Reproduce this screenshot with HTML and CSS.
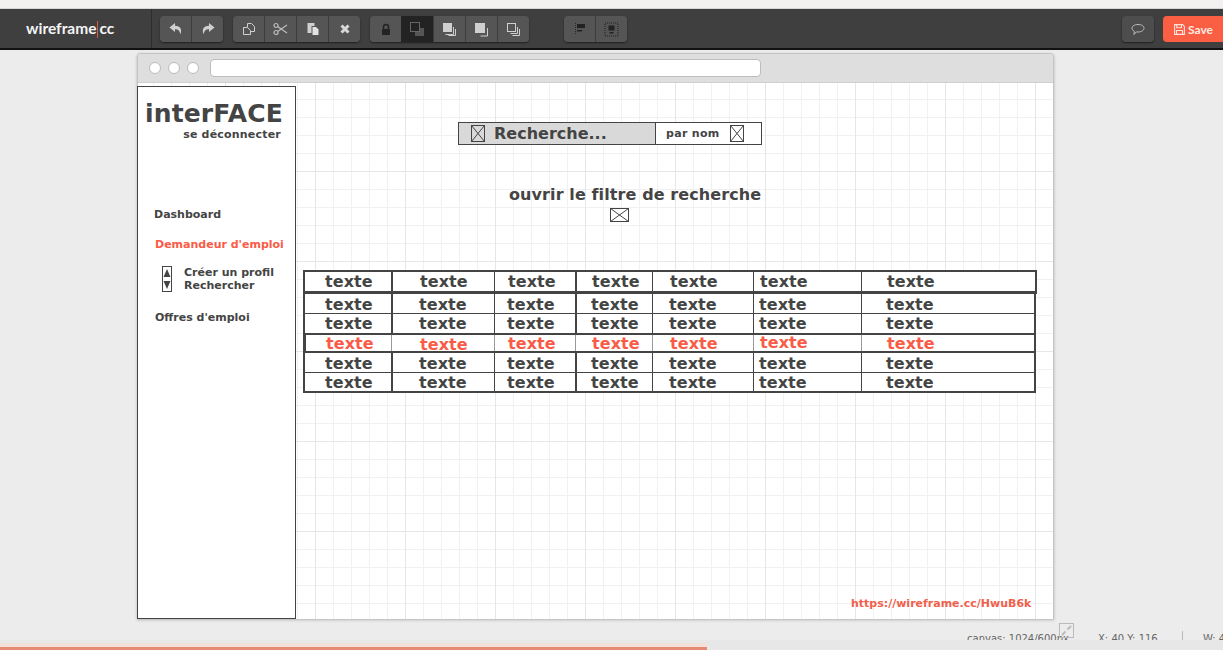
FILE: index.html
```html
<!DOCTYPE html>
<html lang="fr">
<head>
    <meta charset="UTF-8">
    <meta name="viewport" content="width=device-width, initial-scale=1.0">
    <title>wireframe.cc</title>
    <link rel="stylesheet" href="styles.css">
</head>
<body>
    <div class="top-strip"></div>
    <header class="toolbar">
        <div class="logo">wireframe<span class="logo-bar"></span>cc</div>
        <div class="btn-group first">
            <button class="tool"><svg width="14" height="14" viewBox="0 0 14 14"><path d="M6 1L0.5 5.500 6 10V7.200c3 0 4.600 1 5.500 5.300C13.500 6.500 10.500 3.800 6 3.800z" fill="#cfcfcf"/></svg></button>
            <button class="tool"><svg width="14" height="14" viewBox="0 0 14 14"><path d="M8 1l5.500 4.500L8 10V7.200c-3 0-4.600 1-5.500 5.300C.5 6.500 3.500 3.800 8 3.800z" fill="#cfcfcf"/></svg></button>
        </div>
        <div class="btn-group">
            <button class="tool"><svg width="14" height="14" viewBox="0 0 14 14" fill="none" stroke="#d0d0d0"><path d="M5.500 5V1.500h4l3 3v5h-4"/><path d="M1.500 5.500h4l3 3v4h-7z"/></svg></button>
            <button class="tool"><svg width="15" height="14" viewBox="0 0 15 14" fill="none" stroke="#bdbdbd" stroke-width="1.200"><circle cx="3" cy="3.500" r="2"/><circle cx="3" cy="10.500" r="2"/><path d="M4.600 4.600L14 11M4.600 9.400L14 3"/></svg></button>
            <button class="tool"><svg width="14" height="14" viewBox="0 0 14 14"><path d="M1.500 1h7v3h-3v7h-4z" fill="#cfcfcf"/><path d="M6.500 5H10l2.500 2.500V13h-6z" fill="#e2e2e2"/></svg></button>
            <button class="tool"><svg width="12" height="12" viewBox="0 0 12 12"><path d="M2.500 2.500l7 7M9.500 2.500l-7 7" stroke="#d8d8d8" stroke-width="3"/></svg></button>
        </div>
        <div class="btn-group">
            <button class="tool"><svg width="12" height="13" viewBox="0 0 12 13"><path d="M3.500 6V4a2.500 2.500 0 015 0v2" fill="none" stroke="#222" stroke-width="1.500"/><rect x="2" y="6" width="8" height="6" rx="1" fill="#222"/></svg></button>
            <button class="tool active"><svg width="15" height="15" viewBox="0 0 15 15"><rect x="5" y="6" width="9" height="8" fill="#555"/><rect x=".5" y=".5" width="9" height="9" fill="#232323" stroke="#666"/></svg></button>
            <button class="tool"><svg width="15" height="15" viewBox="0 0 15 15"><path d="M11.500 5v7.500h-8" fill="none" stroke="#cfcfcf"/><path d="M13.500 7v6.500h-7" fill="none" stroke="#cfcfcf"/><rect x="1" y="1" width="9" height="9" fill="#cfcfcf"/></svg></button>
            <button class="tool"><svg width="15" height="15" viewBox="0 0 15 15"><rect x="1" y="1" width="10" height="10" fill="#cfcfcf"/><path d="M13.500 6v8h-7" fill="none" stroke="#cfcfcf"/></svg></button>
            <button class="tool"><svg width="15" height="15" viewBox="0 0 15 15" fill="none" stroke="#cfcfcf"><rect x="1.500" y="1.500" width="8" height="8"/><path d="M11.500 5v6.500h-7M13.500 7v6.500h-7"/></svg></button>
        </div>
        <div class="btn-group last-left">
            <button class="tool"><svg width="14" height="14" viewBox="0 0 14 14"><path d="M2.500 1v12" stroke="#2a2a2a" stroke-dasharray="1 1"/><rect x="4" y="2" width="8" height="4" fill="#222"/><rect x="4" y="8" width="5" height="1.500" fill="#222"/></svg></button>
            <button class="tool"><svg width="15" height="15" viewBox="0 0 15 15"><rect x="1" y="1" width="13" height="13" fill="none" stroke="#222" stroke-dasharray="1 1"/><rect x="4.500" y="3.500" width="6" height="5" fill="#222"/><rect x="5.500" y="10" width="4" height="1.500" fill="#222"/></svg></button>
        </div>
        <div class="toolbar-right">
            <button class="tool solo"><svg width="14" height="13" viewBox="0 0 14 13" fill="none" stroke="#bdbdbd"><path d="M7 1.500c3.300 0 6 1.500 6 3.700S10.300 9 7 9c-.6 0-1.100 0-1.700-.1L3 11.500l.3-3.200C1.800 7.600 1 6.500 1 5.200 1 3 3.700 1.500 7 1.500z"/></svg></button>
            <button class="save"><svg width="11" height="11" viewBox="0 0 11 11" fill="none" stroke="#ffe3dc" stroke-width="1.100"><path d="M.6.6h8l1.800 1.800v8H.6z"/><path d="M2.800.8v3h4.600v-3M2.500 10V6.500h6V10"/></svg>Save</button>
        </div>
    </header>

    <main class="workspace">
        <div class="frame">
            <div class="frame-bar">
                <span class="dot"></span>
                <span class="dot"></span>
                <span class="dot"></span>
                <span class="url-bar"></span>
            </div>
            <div class="canvas">
                <aside class="sidebar">
                    <div class="brand">interFACE</div>
                    <div class="logout">se déconnecter</div>
                    <div class="nav-item dashboard">Dashboard</div>
                    <div class="nav-item nav-red">Demandeur d'emploi</div>
                    <div class="subnav">
                        <svg class="stepper" width="10" height="26" viewBox="0 0 10 26"><rect x=".5" y=".5" width="9" height="25" fill="#fff" stroke="#444"/><path d="M5 3l3.500 8h-7z" fill="#444"/><path d="M1.500 15h7L5 23z" fill="#444"/></svg>
                        <div class="subnav-links">
                            <div>Créer un profil</div>
                            <div>Rechercher</div>
                        </div>
                    </div>
                    <div class="nav-item offers">Offres d'emploi</div>
                </aside>

                <div class="search-box">
                    <div class="search-main">
                        <svg class="ph" width="14" height="17" viewBox="0 0 14 17"><rect x=".5" y=".5" width="13" height="16" fill="none" stroke="#444"/><path d="M.5.500l13 16M13.500.500l-13 16" stroke="#444" fill="none"/></svg>
                        <span>Recherche...</span>
                    </div>
                    <div class="search-side">
                        <span>par nom</span>
                        <svg class="ph" width="14" height="17" viewBox="0 0 14 17"><rect x=".5" y=".5" width="13" height="16" fill="none" stroke="#444"/><path d="M.5.500l13 16M13.500.500l-13 16" stroke="#444" fill="none"/></svg>
                    </div>
                </div>

                <div class="filter">
                    <div class="filter-title">ouvrir le filtre de recherche</div>
                    <svg class="filter-icon" width="19" height="14" viewBox="0 0 19 14"><rect x=".5" y=".5" width="18" height="13" fill="#fff" stroke="#444"/><path d="M.5.500l18 13M18.500.500l-18 13" stroke="#444" fill="none"/></svg>
                </div>

                <div class="grid-table">
                    <div class="row head"><span>texte</span><span>texte</span><span>texte</span><span>texte</span><span>texte</span><span>texte</span><span>texte</span></div>
                    <div class="body">
                        <div class="row low"><span>texte</span><span>texte</span><span>texte</span><span>texte</span><span>texte</span><span>texte</span><span>texte</span></div>
                        <div class="row"><span>texte</span><span>texte</span><span>texte</span><span>texte</span><span>texte</span><span>texte</span><span>texte</span></div>
                        <div class="row selected"><span>texte</span><span>texte</span><span>texte</span><span>texte</span><span>texte</span><span>texte</span><span>texte</span></div>
                        <div class="row low"><span>texte</span><span>texte</span><span>texte</span><span>texte</span><span>texte</span><span>texte</span><span>texte</span></div>
                        <div class="row"><span>texte</span><span>texte</span><span>texte</span><span>texte</span><span>texte</span><span>texte</span><span>texte</span></div>
                    </div>
                </div>

                <div class="share-link">https://wireframe.cc/HwuB6k</div>
            </div>
        </div>
        <div class="status">
            <span class="canvas-size">canvas: 1024/600px</span>
            <span class="coords">X: 40 Y: 116</span>
            <span class="dims">W: 4</span>
            <svg class="expand" width="15" height="15" viewBox="0 0 15 15" fill="none" stroke="#bbb"><rect x=".5" y=".5" width="14" height="14"/><path d="M8.500 6.500L12 3M3 12l3.500-3.500" stroke-width="2"/></svg>
        </div>
    </main>

    <div class="progress"><div class="progress-fill"></div></div>
</body>
</html>
```

FILE: styles.css
```css
html, body {
    margin: 0;
    padding: 0;
    height: 100%;
}
body {
    width: 1223px;
    height: 650px;
    display: flex;
    flex-direction: column;
    overflow: hidden;
    background-color: #ececec;
    font-family: "DejaVu Sans", sans-serif;
    color: #444;
}
svg {
    display: block;
    flex: none;
}

/* toolbar */
.top-strip {
    height: 9px;
    background-color: #f2f1ef;
    border-bottom: 1px solid #d6d6d4;
    box-sizing: border-box;
}
.toolbar {
    height: 41px;
    box-sizing: border-box;
    display: flex;
    align-items: flex-start;
    padding-top: 7px;
    background-color: #3f3f3f;
    border-bottom: 2px solid #111;
}
.logo {
    width: 152px;
    height: 39px;
    margin-top: -7px;
    padding-left: 26px;
    box-sizing: border-box;
    border-right: 1px solid #2e2e2e;
    font-family: Lato, sans-serif;
    font-weight: 700;
    font-size: 15.5px;
    line-height: 39px;
    color: #f4f4f4;
}
.logo-bar {
    display: inline-block;
    width: 1px;
    height: 17px;
    margin: 0 1px;
    vertical-align: -4px;
    background-color: #d0604a;
}
.btn-group {
    display: flex;
    margin-left: 10px;
    border-radius: 4px;
    box-shadow: 0 1px 2px rgba(0, 0, 0, 0.5);
}
.btn-group.first {
    margin-left: 8px;
}
.btn-group.last-left {
    margin-left: 35px;
}
.tool {
    width: 32px;
    height: 26px;
    padding: 0;
    display: flex;
    align-items: center;
    justify-content: center;
    background-color: #555;
    border: none;
    border-left: 1px solid #3d3d3d;
}
.tool:first-child {
    width: 31px;
    border-left: none;
    border-radius: 4px 0 0 4px;
}
.tool:last-child {
    border-radius: 0 4px 4px 0;
}
.tool.active {
    background-color: #232323;
    border-left: none;
}
.toolbar-right {
    display: flex;
    gap: 9px;
    margin-left: auto;
}
.tool.solo {
    width: 32px;
    border-radius: 4px;
    background-color: #4d4d4d;
    box-shadow: 0 1px 2px rgba(0, 0, 0, 0.5);
}
.save {
    width: 60px;
    height: 26px;
    padding: 0 0 0 11px;
    display: flex;
    align-items: center;
    gap: 3px;
    border: none;
    border-radius: 4px 0 0 4px;
    background-color: #fa5f44;
    color: #ffe9e3;
    font-family: Lato, sans-serif;
    font-size: 12px;
    font-weight: 700;
}

/* wireframe window */
.workspace {
    flex: 1;
    min-height: 0;
    overflow: hidden;
}
.frame {
    width: 917px;
    height: 566px;
    box-sizing: border-box;
    margin: 3px 0 0 137px;
    display: flex;
    flex-direction: column;
    border: 1px solid #c4c4c4;
    border-bottom: none;
    border-radius: 4px 4px 0 0;
    box-shadow: 0 1px 3px rgba(0, 0, 0, 0.25);
    background-color: #fff;
}
.frame-bar {
    height: 29px;
    flex: none;
    display: flex;
    align-items: center;
    gap: 7px;
    padding-left: 11px;
    box-sizing: border-box;
    background-color: #dedede;
    border-bottom: 1px solid #cfcfcf;
    border-radius: 3px 3px 0 0;
}
.dot {
    width: 12px;
    height: 12px;
    border: 1px solid #bbb;
    border-radius: 50%;
    background-color: #fff;
    box-sizing: border-box;
}
.url-bar {
    width: 551px;
    height: 18px;
    margin-left: 4px;
    box-sizing: border-box;
    border: 1px solid #bdbdbd;
    border-radius: 4px;
    background-color: #fff;
}
.canvas {
    position: relative;
    flex: 1;
    background-color: #fff;
    background-image:
        linear-gradient(to right, #e6e6e6 1px, transparent 1px),
        linear-gradient(to bottom, #e6e6e6 1px, transparent 1px),
        linear-gradient(to right, #f1f1f1 1px, transparent 1px),
        linear-gradient(to bottom, #f1f1f1 1px, transparent 1px);
    background-size: 90px 90px, 90px 90px, 18px 18px, 18px 18px;
    background-position: 87px 88px, 87px 88px, 15px 16px, 15px 16px;
}

/* sidebar */
.sidebar {
    position: absolute;
    left: -1px;
    top: 3px;
    bottom: 0;
    width: 159px;
    box-sizing: border-box;
    padding-top: 12px;
    border: 1px solid #444;
    background-color: #fff;
    font-weight: 700;
    font-size: 11px;
}
.brand {
    margin-left: 7px;
    font-size: 25px;
    letter-spacing: 0.15px;
    line-height: 29px;
}
.logout {
    margin: 1px 14px 0 0;
    text-align: right;
    line-height: 12px;
    letter-spacing: 0.2px;
}
.nav-item {
    margin-left: 17px;
    line-height: 14px;
    white-space: nowrap;
}
.dashboard {
    margin-left: 16px;
    margin-top: 67px;
}
.nav-red {
    margin-top: 16px;
    color: #fa5b47;
}
.subnav {
    display: flex;
    gap: 12px;
    margin: 14px 0 0 24px;
}
.subnav-links {
    line-height: 13px;
}
.offers {
    margin-top: 19px;
}

/* search and filter */
.search-box {
    position: absolute;
    left: 320px;
    top: 39px;
    width: 304px;
    height: 23px;
    box-sizing: border-box;
    display: flex;
    border: 1px solid #444;
    background-color: #fff;
    font-weight: 700;
}
.search-main {
    width: 197px;
    flex: none;
    display: flex;
    align-items: center;
    gap: 9px;
    padding-left: 12px;
    box-sizing: border-box;
    background-color: #d9d9d9;
    border-right: 1px solid #444;
    font-size: 16px;
}
.search-side {
    display: flex;
    align-items: center;
    gap: 10px;
    padding-left: 10px;
    font-size: 11px;
    letter-spacing: 0.3px;
}
.filter {
    position: absolute;
    left: 371px;
    top: 102px;
    font-size: 16px;
    font-weight: 700;
    letter-spacing: 0.1px;
    line-height: 20px;
}
.filter-title {
    margin-bottom: 3px;
}
.filter-icon {
    margin-left: 101px;
}

/* table */
.grid-table {
    position: absolute;
    left: 165px;
    top: 187px;
    width: 734px;
    font-size: 16px;
    font-weight: 700;
    letter-spacing: 0.1px;
}
.row {
    display: grid;
    grid-template-columns: 86px 103px 81px 77px 101px 108px 1fr;
    grid-template-rows: 100%;
    height: 19px;
    line-height: 19px;
    border-bottom: 1px solid #444;
}
.row.low {
    line-height: 21px;
}
.row span {
    border-left: 1px solid #444;
}
.row span:nth-child(1) { padding-left: 20px; border-left: none; }
.row span:nth-child(2) { padding-left: 26px; border-left-width: 2px; }
.row span:nth-child(3) { padding-left: 12px; }
.row span:nth-child(4) { padding-left: 14px; border-left-width: 2px; }
.row span:nth-child(5) { padding-left: 16px; }
.row span:nth-child(6) { padding-left: 5px; }
.row span:nth-child(7) { padding-left: 24px; }
.row.head {
    width: 730px;
    line-height: 20px;
    border: 2px solid #444;
    border-bottom-width: 3px;
    background-color: #fff;
}
.row.head span {
    text-indent: 1px;
}
.row.head span:nth-child(1) {
    text-indent: 0;
}
.body {
    width: 729px;
    border: 2px solid #444;
    border-top: none;
    background-color: #fff;
}
.body .row:nth-child(2) {
    border-bottom: none;
}
.body .row:last-child {
    height: 18px;
    border-bottom: none;
}
.row.selected {
    height: 16px;
    line-height: 18px;
    border-top: 2px solid #444;
    border-bottom-width: 2px;
    color: #fa5b47;
}
.row.selected span {
    border-left-color: #999;
    text-indent: 1px;
}
.row.selected span:nth-child(1) {
    box-shadow: inset 1px 0 #444;
}
.row.selected span:nth-child(2) { line-height: 20px; border-left-width: 1px; padding-left: 27px; }
.row.selected span:nth-child(4) { border-left-width: 1px; padding-left: 15px; }
.row.selected span:nth-child(6) { line-height: 16px; }
.share-link {
    position: absolute;
    left: 713px;
    top: 514px;
    font-size: 11px;
    font-weight: 700;
    line-height: 14px;
    color: #f0614c;
}

/* status line, cut off by the bar below */
.status {
    position: relative;
    height: 21px;
    font-size: 10px;
    color: #666;
}
.status span {
    position: absolute;
    top: 14px;
    white-space: nowrap;
}
.canvas-size { left: 967px; }
.coords { left: 1098px; }
.dims { left: 1203px; }
.coords::after {
    content: "";
    position: absolute;
    left: 84px;
    top: -2px;
    width: 1px;
    height: 14px;
    background-color: #bbb;
}
.expand {
    position: absolute;
    left: 1059px;
    top: 4px;
}

/* bottom progress */
.progress {
    height: 10px;
    flex: none;
    background-color: #e7e7e7;
}
.progress-fill {
    width: 707px;
    height: 7px;
    box-sizing: border-box;
    border-top: 4px solid #f3e0d8;
    background-color: #e58b74;
    transform: translateY(3px);
}
```
